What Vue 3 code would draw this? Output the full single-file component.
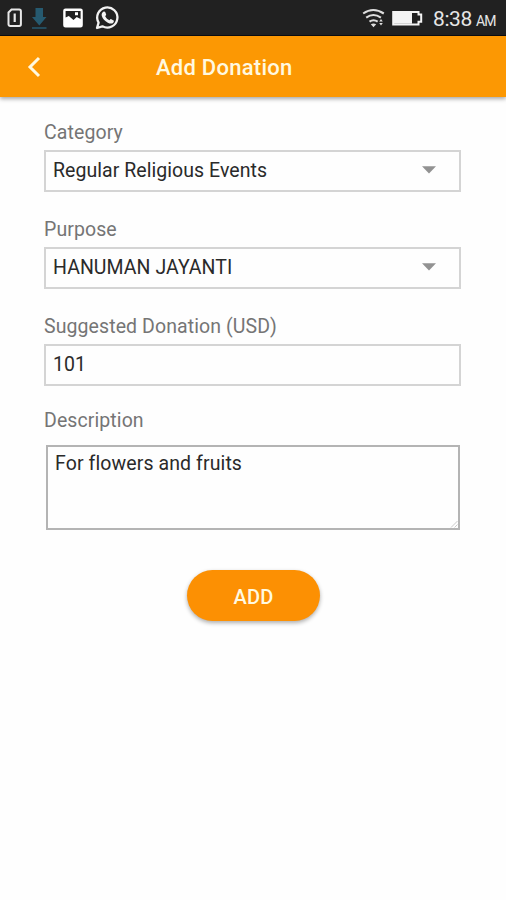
<script setup>
import { ref } from 'vue'

const fields = [
  { label: 'Category', value: 'Regular Religious Events', select: true, cls: 'category' },
  { label: 'Purpose', value: 'HANUMAN JAYANTI', select: true, cls: 'purpose' },
  { label: 'Suggested Donation (USD)', value: '101', select: false, cls: 'amount' },
]
const description = ref('For flowers and fruits')
</script>

<template>
  <div class="screen">
    <div class="status">
      <svg class="status-icons" width="130" height="35" viewBox="0 0 130 35">
        <path d="M11.500 9.500h7.700a1.700 1.700 0 0 1 1.700 1.700v13.100a1.700 1.700 0 0 1-1.700 1.700h-9a1.700 1.700 0 0 1-1.700-1.700V12.500z" fill="none" stroke="#e8e8e8" stroke-width="2" />
        <path d="M14.700 13.500v8.500" stroke="#e8e8e8" stroke-width="2.200" />
        <path d="M35.500 8h7.500v9h3.500l-7.200 8.500-7.300-8.500h3.500zM32 27.300h14.500v1.500H32z" fill="#265a70" />
        <path fill-rule="evenodd" d="M65.500 8.500h15a2.300 2.300 0 0 1 2.300 2.300v14.400a2.300 2.300 0 0 1-2.300 2.300h-15a2.300 2.300 0 0 1-2.300-2.300V10.800a2.300 2.300 0 0 1 2.300-2.300zM65.600 11v6.500l3.200-1.500 4.700 4 3.200-3 3.900 2V11zM75 12.200h3v3h-3z" fill="#fff" />
        <path d="M97 28l1.600-5.400A10.100 10.100 0 1 1 102.400 26.300z" fill="none" stroke="#f2f2f2" stroke-width="2.300" stroke-linejoin="round" />
        <path d="M103.300 11.700c.8-.5 1.600-.3 1.900.4l.9 2.200c.2.600-.2 1.100-.9 1.900 1 2 2.300 3.200 4.300 4.100.8-1 1.200-1.400 1.800-1.100l2.300 1.200c.5.300.3 1.300-.2 2-1.200 1.500-3.100 1.500-5.600.3-3-1.500-5.200-4-6-6.600-.5-1.800.2-3.500 1.500-4.400z" fill="#f2f2f2" />
      </svg>
      <div class="status-right">
        <svg width="64" height="35" viewBox="0 0 64 35">
          <g fill="none" stroke="#dedede" stroke-width="2.100">
            <path d="M3.200 13.500q10-7 20.600 0" />
            <path d="M6.200 17.700q7.200-5.300 14.700 0" />
            <path d="M9.500 21.700q4-3 8.200 0" />
          </g>
          <path d="M10.800 24.300q2.700-1.700 5.400 0l-2.700 3zM21 19l1.800 2.500h-3.600zM21 25.500l1.800-2.500h-3.600z" fill="#dedede" />
          <path d="M33.200 12h25.300v2.500h2.700v7.300h-2.700v2.700H33.200z" fill="none" stroke="#f4f4f4" stroke-width="2" />
          <path d="M34 12.800H52v10.900H34z" fill="#f4f4f4" />
        </svg>
        <span class="time">8:38</span><span class="meridiem">AM</span>
      </div>
    </div>

    <header class="bar">
      <svg class="back" width="18" height="24" viewBox="0 0 18 24">
        <path d="M14 3L5 12l9 9" fill="none" stroke="#fff9e0" stroke-width="3" />
      </svg>
      <h1>Add Donation</h1>
    </header>

    <main class="form">
      <div v-for="f in fields" :key="f.label" class="field">
        <label>{{ f.label }}</label>
        <div class="box">
          <span class="value" :class="f.cls">{{ f.value }}</span>
          <svg v-if="f.select" width="14" height="8" viewBox="0 0 14 8">
            <path d="M0 0.300h14L7 7.600z" fill="#929292" />
          </svg>
        </div>
      </div>
      <div class="field description">
        <label>Description</label>
        <div class="area">
          <span class="value">{{ description }}</span>
          <svg class="grip" width="8" height="8" viewBox="0 0 8 8">
            <path d="M1 7.500L7.500 1M4.500 7.500l3-3" stroke="#c5c5c5" stroke-width="0.900" />
          </svg>
        </div>
      </div>
      <button class="add" type="button">ADD</button>
    </main>
  </div>
</template>

<style>
body { margin: 0; background: #fefefe; }
</style>

<style scoped>
.screen {
  width: 506px;
  height: 900px;
  overflow: hidden;
  background: #fefefe;
  font-family: Roboto, "Liberation Sans", sans-serif;
}
.status {
  height: 36px;
  box-sizing: border-box;
  border-bottom: 1px solid #0b0d12;
  display: flex;
  justify-content: space-between;
  background: #212121;
  color: #e6e6e6;
}
.status svg { display: block; flex: none; }
.status-right {
  display: flex;
  align-items: baseline;
  width: 146px;
}
.status-right svg { align-self: flex-start; }
.time { margin-left: 9px; font-size: 21px; line-height: 38px; letter-spacing: -0.4px; }
.meridiem { margin-left: 4px; font-size: 14px; letter-spacing: -0.9px; }
.bar {
  height: 61px;
  display: flex;
  align-items: center;
  background: #fc9803;
  box-shadow: 0 2px 4px rgba(0, 0, 0, 0.34);
}
.back { margin-left: 25px; }
h1 {
  margin: 2px 0 0 113px;
  font-size: 22px;
  font-weight: 500;
  line-height: 30px;
  letter-spacing: 0.25px;
  color: #fff9e0;
  white-space: nowrap;
}
.form {
  display: flex;
  flex-direction: column;
  padding: 22px 45px 0 44px;
}
.field { height: 97px; }
.field label {
  display: block;
  height: 31px;
  line-height: 28px;
  font-size: 19.500px;
  letter-spacing: 0.09px;
  color: #757575;
}
.box {
  height: 42px;
  box-sizing: border-box;
  display: flex;
  align-items: center;
  justify-content: space-between;
  padding: 0 23px 2px 7px;
  border: 2px solid #d4d4d4;
}
.value {
  font-size: 19.500px;
  line-height: 24px;
  letter-spacing: 0.05px;
  color: #2a2a2a;
  white-space: nowrap;
}
.box .value { padding-top: 2px; }
.description { height: 163px; margin-top: -3px; }
.area {
  position: relative;
  height: 85px;
  box-sizing: border-box;
  margin: 7px 1px 0 2px;
  padding: 5px 7px;
  border: 2px solid #b4b4b4;
}
.area .value { letter-spacing: 0.1px; }
.grip { position: absolute; right: 0; bottom: 0; }
.add {
  align-self: center;
  margin: 0 0 0 2px;
  width: 133px;
  height: 51px;
  border: 0;
  border-radius: 26px;
  background: #fc9003;
  color: #fff9e0;
  font: 500 20px/51px Roboto, "Liberation Sans", sans-serif;
  letter-spacing: 0.2px;
  padding: 2px 0 0;
  box-shadow: 0 2px 4px rgba(0, 0, 0, 0.32);
}
</style>
